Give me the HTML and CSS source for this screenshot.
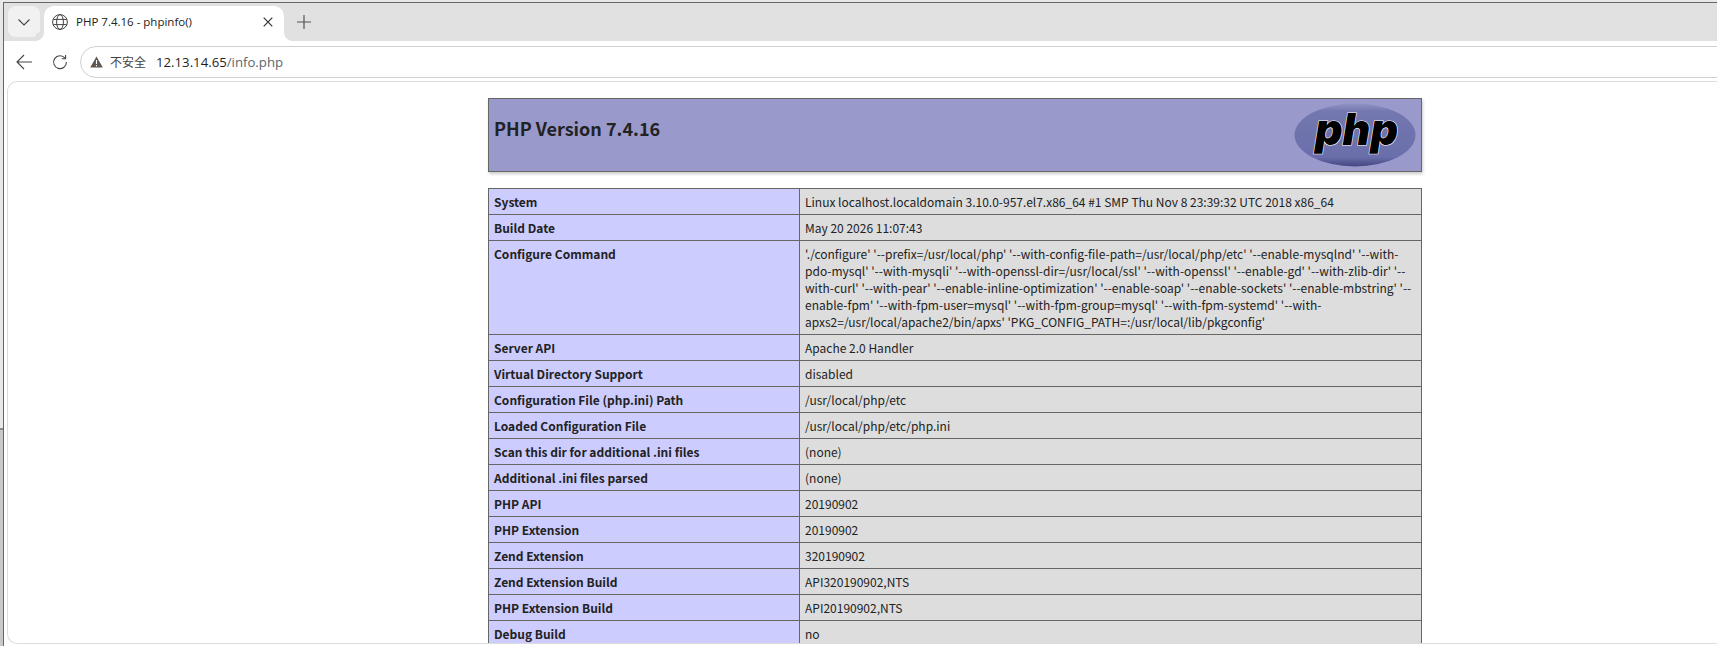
FILE: index.html
```html
<!DOCTYPE html>
<html lang="en">

<head>
    <meta charset="UTF-8">
    <title>PHP 7.4.16 - phpinfo()</title>
    <link rel="stylesheet" href="styles.css">
</head>

<body>
    <div class="window">
        <div class="tabstrip">
            <div class="tab-search">
                <svg width="14" height="14" viewBox="0 0 14 14"><path d="M1.5 4.5L7 10l5.5-5.5" fill="none" stroke="#444" stroke-width="1.1"/></svg>
            </div>
            <div class="tab">
                <svg class="globe" width="16" height="16" viewBox="0 0 16 16" fill="none" stroke="#444" stroke-width="1">
                    <circle cx="8" cy="8" r="7.4"/>
                    <ellipse cx="8" cy="8" rx="3.4" ry="7.4"/>
                    <path d="M1.2 5.4h13.6M1.2 10.6h13.6"/>
                </svg>
                <span class="tab-title">PHP 7.4.16 - phpinfo()</span>
                <svg class="tab-close" width="12" height="12" viewBox="0 0 12 12"><path d="M1.7 1.7l8.6 8.6M10.3 1.7l-8.6 8.6" stroke="#333" stroke-width="1.2"/></svg>
            </div>
            <svg class="new-tab" width="16" height="16" viewBox="0 0 16 16"><path d="M8 1v14M1 8h14" stroke="#555" stroke-width="1.2"/></svg>
        </div>
        <div class="toolbar">
            <svg class="nav-back" width="16" height="16" viewBox="0 0 16 16" fill="none"><path d="M16 8H1M8 1L1 8l7 7" stroke="#444" stroke-width="1.1"/></svg>
            <svg class="nav-reload" width="16" height="16" viewBox="0 0 16 16" fill="none"><path d="M13 4.2A6.4 6.4 0 1 0 14.4 8" stroke="#444" stroke-width="1.1"/><path d="M13.6 1v3.8H9.8" stroke="#444" stroke-width="1.1"/></svg>
            <div class="omnibox">
                <svg class="warn" width="13" height="12" viewBox="0 0 13 12"><path d="M6.5 0.5L12.8 11.5H0.2z" fill="#5f5750"/><path d="M6.5 4v4M6.5 9v1.3" stroke="#fff" stroke-width="1.1"/></svg>
                <span class="warn-text">不安全</span>
                <span class="url"><span class="url-host">12.13.14.65</span>/info.php</span>
            </div>
        </div>
        <div class="viewport">
            <div class="center">
                <div class="php-header">
                    <h1 class="php-title">PHP Version 7.4.16</h1>
                    <svg class="php-logo" width="124" height="64" viewBox="0 0 124 64">
                        <defs>
                            <linearGradient id="logoFill" x1="0" y1="0" x2="0" y2="1">
                                <stop offset="0" stop-color="#8f93c4"/>
                                <stop offset="0.12" stop-color="#7478b0"/>
                                <stop offset="0.85" stop-color="#6a6eaa"/>
                                <stop offset="1" stop-color="#43467f"/>
                            </linearGradient>
                        </defs>
                        <ellipse cx="63" cy="32" rx="60.5" ry="31.5" fill="url(#logoFill)"/>
                        <text class="php-logo-text" x="23" y="42" textLength="83" lengthAdjust="spacingAndGlyphs">php</text>
                    </svg>
                </div>
                <table class="info">
                    <tr><td class="e">System</td><td class="v">Linux localhost.localdomain 3.10.0-957.el7.x86_64 #1 SMP Thu Nov 8 23:39:32 UTC 2018 x86_64</td></tr>
                    <tr><td class="e">Build Date</td><td class="v">May 20 2026 11:07:43</td></tr>
                    <tr><td class="e">Configure Command</td><td class="v">'./configure' '--prefix=/usr/local/php' '--with-config-file-path=/usr/local/php/etc' '--enable-mysqlnd' '--with-pdo-mysql' '--with-mysqli' '--with-openssl-dir=/usr/local/ssl' '--with-openssl' '--enable-gd' '--with-zlib-dir' '--with-curl' '--with-pear' '--enable-inline-optimization' '--enable-soap' '--enable-sockets' '--enable-mbstring' '--enable-fpm' '--with-fpm-user=mysql' '--with-fpm-group=mysql' '--with-fpm-systemd' '--with-apxs2=/usr/local/apache2/bin/apxs' 'PKG_CONFIG_PATH=:/usr/local/lib/pkgconfig'</td></tr>
                    <tr><td class="e">Server API</td><td class="v">Apache 2.0 Handler</td></tr>
                    <tr><td class="e">Virtual Directory Support</td><td class="v">disabled</td></tr>
                    <tr><td class="e">Configuration File (php.ini) Path</td><td class="v">/usr/local/php/etc</td></tr>
                    <tr><td class="e">Loaded Configuration File</td><td class="v">/usr/local/php/etc/php.ini</td></tr>
                    <tr><td class="e">Scan this dir for additional .ini files</td><td class="v">(none)</td></tr>
                    <tr><td class="e">Additional .ini files parsed</td><td class="v">(none)</td></tr>
                    <tr><td class="e">PHP API</td><td class="v">20190902</td></tr>
                    <tr><td class="e">PHP Extension</td><td class="v">20190902</td></tr>
                    <tr><td class="e">Zend Extension</td><td class="v">320190902</td></tr>
                    <tr><td class="e">Zend Extension Build</td><td class="v">API320190902,NTS</td></tr>
                    <tr><td class="e">PHP Extension Build</td><td class="v">API20190902,NTS</td></tr>
                    <tr><td class="e">Debug Build</td><td class="v">no</td></tr>
                </table>
            </div>
        </div>
    </div>
</body>

</html>
```

FILE: styles.css
```css
* {
    margin: 0;
    padding: 0;
    box-sizing: border-box;
}

html,
body {
    height: 646px;
    overflow: hidden;
}

body {
    padding-top: 2px;
    padding-left: 3px;
    background: linear-gradient(#e8e8e8 428px, #8a8a8a 428px, #8a8a8a 430px, #c9c9c9 430px);
}

.window {
    height: 644px;
    overflow: hidden;
    background: #fff;
    border-top: 1px solid #666;
    border-left: 1px solid #666;
    font-family: "Open Sans", "Noto Sans CJK SC", sans-serif;
}

.tabstrip {
    display: flex;
    align-items: flex-start;
    height: 38px;
    padding: 3px 0 0 4px;
    background: #e1e1e1;
}

.tab-search {
    display: flex;
    justify-content: center;
    align-items: center;
    width: 32px;
    height: 31px;
    border-radius: 8px;
    background: #f1f1f1;
}

.tab {
    position: relative;
    display: flex;
    align-items: center;
    width: 240px;
    height: 35px;
    margin-left: 4px;
    padding: 0 10px 4px 8px;
    border-radius: 10px 10px 0 0;
    background: #fff;
}

/* the little curves where the tab meets the toolbar */
.tab::before,
.tab::after {
    content: "";
    position: absolute;
    bottom: 0;
    width: 8px;
    height: 8px;
}

.tab::before {
    left: -8px;
    background: radial-gradient(circle at 0 0, #e1e1e1 7.5px, #fff 8px);
}

.tab::after {
    right: -8px;
    background: radial-gradient(circle at 100% 0, #e1e1e1 7.5px, #fff 8px);
}

.globe {
    flex: none;
}

.tab-title {
    flex: 1;
    margin-left: 8px;
    font-size: 11.5px;
    color: #222;
    white-space: nowrap;
}

.new-tab {
    margin: 8px 0 0 12px;
}

.toolbar {
    display: flex;
    align-items: center;
    height: 38px;
    padding: 4px 0 0 12px;
    background: #fff;
}

.nav-reload {
    margin-left: 20px;
}

.omnibox {
    display: flex;
    align-items: center;
    flex: 1;
    height: 32px;
    margin-left: 12px;
    margin-right: -20px;
    padding-left: 9px;
    border: 1px solid #d0d0d0;
    border-radius: 16px;
}

.warn-text {
    margin-left: 7px;
    font-size: 12px;
    color: #444;
}

.url {
    margin-left: 10px;
    font-size: 13.2px;
    color: #5c6670;
}

.url-host {
    color: #1f1f1f;
}

.viewport {
    height: 563px;
    margin: 2px 0 0 3px;
    overflow: hidden;
    border: 1px solid #dcdcdc;
    border-right: 0;
    border-radius: 10px 0 0 10px;
    background: #fff;
}

.center {
    width: 934px;
    margin: 16px 0 0 480px;
    font-family: "Noto Sans CJK SC", sans-serif;
    color: #222;
}

.php-header {
    display: flex;
    justify-content: space-between;
    height: 74px;
    padding: 4px 5px 0 5px;
    border: 1px solid #666;
    background: #9999cc;
    box-shadow: 1px 2px 3px #ccc;
}

.php-title {
    margin-top: 12px;
    font-size: 18px;
    line-height: 26px;
    font-weight: bold;
}

.php-logo-text {
    font-family: "Inter", "Liberation Sans", sans-serif;
    font-size: 44px;
    font-weight: 900;
    font-style: italic;
    fill: #000;
    stroke: #fff;
    stroke-width: 1.2px;
    paint-order: stroke;
}

.info {
    width: 934px;
    margin-top: 16px;
    table-layout: fixed;
    border-collapse: collapse;
    font-size: 12px;
    line-height: 17px;
}

.info td {
    padding: 4px 5px;
    border: 1px solid #666;
    vertical-align: top;
}

.e {
    width: 311px;
    background: #ccccff;
    font-weight: bold;
}

.v {
    background: #dddddd;
    overflow-wrap: break-word;
}
```
